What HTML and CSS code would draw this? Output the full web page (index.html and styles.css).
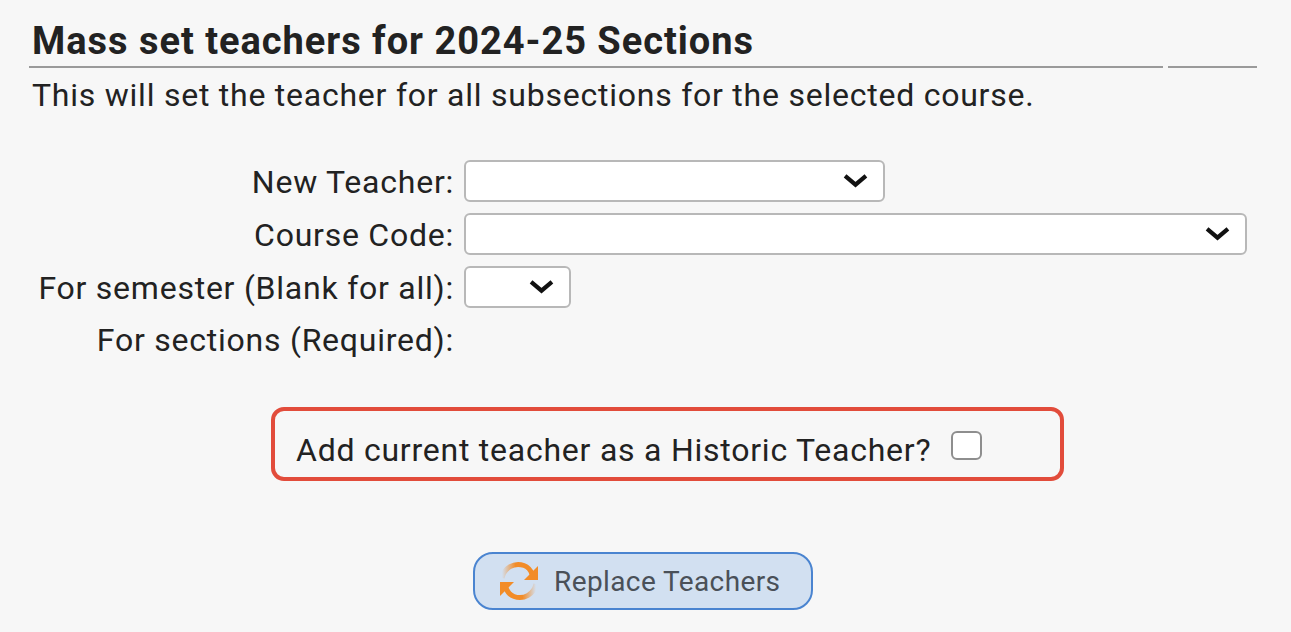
FILE: index.html
```html
<!DOCTYPE html>
<html lang="en">
<head>
  <meta charset="UTF-8">
  <title>Mass set teachers</title>
  <link rel="stylesheet" href="styles.css">
</head>
<body>
  <div id="app">
    <!-- heading -->
    <h2 class="title">Mass set teachers for 2024-25 Sections</h2>
    <div class="title-rule">
      <span class="rule-long"></span>
      <span class="rule-short"></span>
    </div>
    <p class="intro">This will set the teacher for all subsections for the selected course.</p>

    <!-- form -->
    <div class="form-grid">
      <label class="form-label">New Teacher:</label>
      <div class="select-wrap teacher-select">
        <select></select>
        <svg class="chevron" viewBox="0 0 24 14"><path d="M2 2.5 12 11 22 2.5" /></svg>
      </div>

      <label class="form-label">Course Code:</label>
      <div class="select-wrap course-select">
        <select></select>
        <svg class="chevron" viewBox="0 0 24 14"><path d="M2 2.5 12 11 22 2.5" /></svg>
      </div>

      <label class="form-label">For semester (Blank for all):</label>
      <div class="select-wrap semester-select">
        <select></select>
        <svg class="chevron" viewBox="0 0 24 14"><path d="M2 2.5 12 11 22 2.5" /></svg>
      </div>

      <label class="form-label sections-label">For sections (Required):</label>
      <div></div>
    </div>

    <!-- historic teacher -->
    <div class="historic-wrap">
      <div class="historic-box">
        <label class="historic-label">Add current teacher as a Historic Teacher?</label>
        <input class="historic-check" type="checkbox">
      </div>
    </div>

    <!-- submit -->
    <div class="actions">
      <button class="replace-btn" type="button">
        <svg class="replace-icon" viewBox="0 0 40 40">
          <defs>
            <linearGradient id="fade-top" x1="0" y1="0" x2="1" y2="0">
              <stop offset="0" stop-color="#f28c28" stop-opacity="0" />
              <stop offset="0.45" stop-color="#f28c28" />
            </linearGradient>
            <linearGradient id="fade-bottom" x1="1" y1="0" x2="0" y2="0">
              <stop offset="0" stop-color="#f28c28" stop-opacity="0" />
              <stop offset="0.45" stop-color="#f28c28" />
            </linearGradient>
          </defs>
          <path d="M3 17C5 7 15 1 25 4.500 29 6 31.500 9 33 13" fill="none" stroke="url(#fade-top)" stroke-width="5" />
          <path d="M39 5V19H25Z" fill="#f28c28" />
          <path d="M37 23C35 33 25 39 15 35.500 11 34 8.500 31 7 27" fill="none" stroke="url(#fade-bottom)" stroke-width="5" />
          <path d="M1 35V21H15Z" fill="#f28c28" />
        </svg>
        <span>Replace Teachers</span>
      </button>
    </div>
  </div>
</body>
</html>
```

FILE: styles.css
```css
/* page */
body {
  margin: 0;
  background-color: #f7f7f7;
  color: #222;
  font-family: Roboto, "Liberation Sans", sans-serif;
  font-size: 32px;
  letter-spacing: 0.76px;
  overflow: hidden;
}

#app {
  height: 632px;
  padding: 0 34px 0 29px;
  box-sizing: border-box;
}

/* heading */
.title {
  margin: 0;
  padding: 19px 0 0 3px;
  height: 48px;
  box-sizing: border-box;
  font-size: 38px;
  line-height: 44px;
  font-weight: 700;
  letter-spacing: 0.97px;
  white-space: nowrap;
}

.title-rule {
  display: flex;
  gap: 5px;
  margin-top: 18px;
}

.title-rule span {
  height: 2px;
  background-color: #9a9a9a;
}

.rule-long {
  width: 1134px;
}

.rule-short {
  width: 89px;
}

.intro {
  margin: 9px 0 0 3px;
  line-height: 36px;
  white-space: nowrap;
}

/* form */
.form-grid {
  display: grid;
  grid-template-columns: 425px 1fr;
  column-gap: 10px;
  row-gap: 11px;
  margin-top: 47px;
  align-items: center;
}

.form-label {
  text-align: right;
  white-space: nowrap;
  line-height: 42px;
  height: 42px;
  box-sizing: border-box;
  padding-top: 1px;
}

.sections-label {
  padding-top: 0;
}

.select-wrap {
  position: relative;
  height: 42px;
}

.select-wrap select {
  display: block;
  width: 100%;
  height: 42px;
  appearance: none;
  background-color: #fff;
  border: 2px solid #b8b8b8;
  border-radius: 6px;
}

.teacher-select {
  width: 421px;
}

.course-select {
  width: 783px;
}

.semester-select {
  width: 107px;
}

.chevron {
  position: absolute;
  right: 17px;
  top: 13px;
  width: 25px;
  height: 15px;
  fill: none;
  stroke: #111;
  stroke-width: 4;
}

/* historic teacher */
.historic-wrap {
  display: flex;
  margin-top: 46px;
  padding-left: 242px;
}

.historic-box {
  display: flex;
  align-items: flex-start;
  width: 793px;
  height: 74px;
  box-sizing: border-box;
  padding: 20px 0 0 21px;
  border: 4px solid #e24c3b;
  border-radius: 13px;
}

.historic-label {
  line-height: 38px;
  white-space: nowrap;
}

.historic-check {
  appearance: none;
  width: 31px;
  height: 29px;
  margin: 0 0 0 20px;
  background-color: #fff;
  border: 2px solid #8e8e8e;
  border-radius: 6px;
}

/* submit */
.actions {
  display: flex;
  margin-top: 71px;
  padding-left: 444px;
}

.replace-btn {
  display: flex;
  align-items: center;
  width: 340px;
  height: 58px;
  padding: 0 0 0 24px;
  background-color: #d2e0f1;
  border: 2px solid #4a84d0;
  border-radius: 20px;
  color: #4a5058;
  font-family: inherit;
  font-size: 28px;
  letter-spacing: 0.4px;
}

.replace-icon {
  width: 40px;
  height: 40px;
  margin-right: 15px;
}
```
